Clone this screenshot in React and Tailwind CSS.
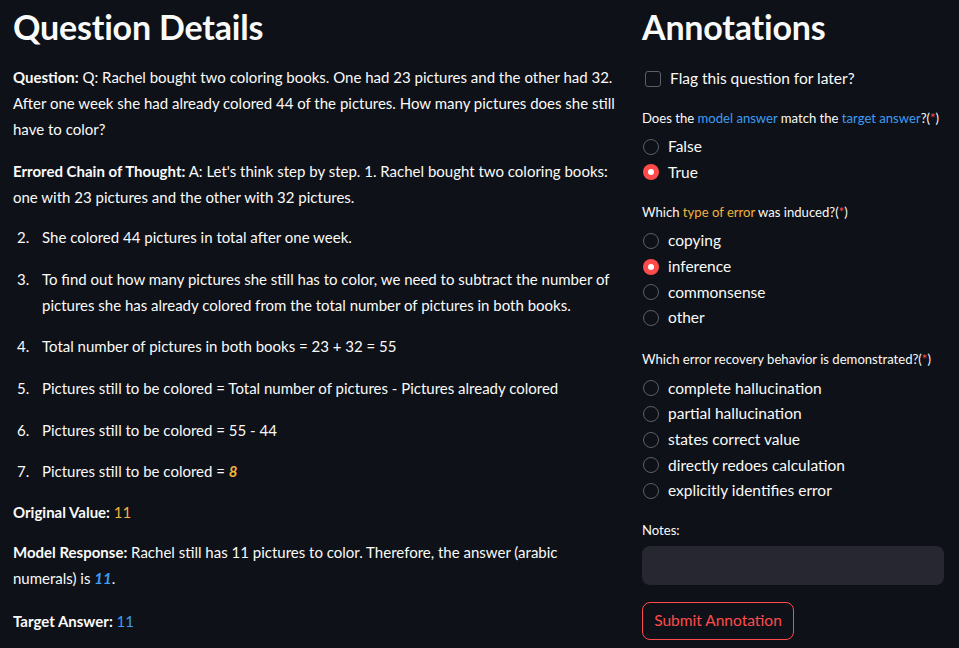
import React, { useState } from "react";

const font = { fontFamily: "Lato, 'Open Sans', sans-serif" };

const Radio = ({ label, checked, onClick }) => (
  <div className="flex items-center h-[25.6px] cursor-pointer" onClick={onClick}>
    {checked ? (
      <span className="w-4 h-4 rounded-full bg-[#ff4b4b] flex items-center justify-center ml-[1px]">
        <span className="w-[6px] h-[6px] rounded-full bg-white" />
      </span>
    ) : (
      <span className="w-4 h-4 rounded-full border border-[#5d5f68] ml-[1px]" />
    )}
    <span className="ml-[9px] text-[15.5px] text-[#fafafa]">{label}</span>
  </div>
);

const RadioGroup = ({ options, value, onChange, className = "mt-[6px]" }) => (
  <div className={`flex flex-col ${className}`}>
    {options.map((o) => (
      <Radio key={o} label={o} checked={value === o} onClick={() => onChange(o)} />
    ))}
  </div>
);

const Req = () => (
  <span>
    (<span className="text-[#ff4b4b]">*</span>)
  </span>
);

const steps = [
  ["2.", <>She colored 44 pictures in total after one week.</>],
  [
    "3.",
    <>
      To find out how many pictures she still has to color, we need to subtract the number of
      <br />
      pictures she has already colored from the total number of pictures in both books.
    </>,
  ],
  ["4.", <>Total number of pictures in both books = 23 + 32 = 55</>],
  ["5.", <>Pictures still to be colored = Total number of pictures - Pictures already colored</>],
  ["6.", <>Pictures still to be colored = 55 - 44</>],
  [
    "7.",
    <>
      Pictures still to be colored = <b className="italic text-[#f2b33d]">8</b>
    </>,
  ],
];

export default function App() {
  const [flag, setFlag] = useState(false);
  const [match, setMatch] = useState("True");
  const [errType, setErrType] = useState("inference");
  const [recovery, setRecovery] = useState(null);

  return (
    <div className="min-h-screen w-full bg-[#0e1117] text-[#fafafa]" style={font}>
      <div className="flex pl-[13px] pr-[15px]">
        {/* left column */}
        <div className="w-[629px] shrink-0 text-[15px] leading-[26px]">
          <h1 className="text-[34px] font-bold leading-[54px] tracking-[-0.2px]">Question Details</h1>
          <p className="mt-[10px]">
            <b>Question:</b> Q: Rachel bought two coloring books. One had 23 pictures and the other had 32.
            <br />
            After one week she had already colored 44 of the pictures. How many pictures does she still
            <br />
            have to color?
          </p>
          <p className="mt-4">
            <b>Errored Chain of Thought:</b> A: Let's think step by step. 1. Rachel bought two coloring books:
            <br />
            one with 23 pictures and the other with 32 pictures.
          </p>
          <div className="flex flex-col gap-[15.7px] mt-[14px]">
            {steps.map(([n, t]) => (
              <div key={n} className="flex">
                <span className="w-[29px] shrink-0 pl-[4px]">{n}</span>
                <span>{t}</span>
              </div>
            ))}
          </div>
          <p className="mt-[15px]">
            <b>Original Value:</b> <span className="text-[#f2b33d]">11</span>
          </p>
          <p className="mt-[14px]">
            <b>Model Response:</b> Rachel still has 11 pictures to color. Therefore, the answer (arabic
            <br />
            numerals) is <b className="italic text-[#3d9df3]">11</b>.
          </p>
          <p className="mt-[17px]">
            <b>Target Answer:</b> <span className="text-[#3d9df3]">11</span>
          </p>
        </div>

        {/* right column */}
        <div className="flex-1 min-w-0">
          <h1 className="text-[34px] font-bold leading-[54px] tracking-[-0.2px]">Annotations</h1>
          <label className="flex items-center mt-[12px] h-[26px] cursor-pointer" onClick={() => setFlag(!flag)}>
            <span
              className={`w-4 h-4 ml-[3px] rounded-[3px] border ${
                flag ? "bg-[#ff4b4b] border-[#ff4b4b]" : "border-[#5d5f68]"
              }`}
            />
            <span className="ml-[9px] text-[15.5px]">Flag this question for later?</span>
          </label>
          <div className="mt-[16px] text-[13.1px] leading-[20px]">
            Does the <span className="text-[#3d9df3]">model answer</span> match the{" "}
            <span className="text-[#3d9df3]">target answer</span>?<Req />
          </div>
          <RadioGroup options={["False", "True"]} value={match} onChange={setMatch} />
          <div className="mt-[17px] text-[13.1px] leading-[20px]">
            Which <span className="text-[#f2b33d]">type of error</span> was induced?<Req />
          </div>
          <RadioGroup
            options={["copying", "inference", "commonsense", "other"]}
            value={errType}
            onChange={setErrType}
          />
          <div className="mt-[18px] text-[13.1px] leading-[20px]">
            Which error recovery behavior is demonstrated?<Req />
          </div>
          <RadioGroup
            className="mt-[7px]"
            options={[
              "complete hallucination",
              "partial hallucination",
              "states correct value",
              "directly redoes calculation",
              "explicitly identifies error",
            ]}
            value={recovery}
            onChange={setRecovery}
          />
          <div className="mt-[16px] text-[13.1px] leading-[20px]">Notes:</div>
          <textarea
            className="mt-[6px] block w-full h-[39px] rounded-lg bg-[#262730] resize-none outline-none px-3 py-2 text-[15px]"
            aria-label="Notes"
          />
          <button className="mt-[17px] h-[38px] w-[152px] rounded-lg border border-[#ff4b4b] text-[#ff4b4b] text-[15.5px]">
            Submit Annotation
          </button>
        </div>
      </div>
    </div>
  );
}
